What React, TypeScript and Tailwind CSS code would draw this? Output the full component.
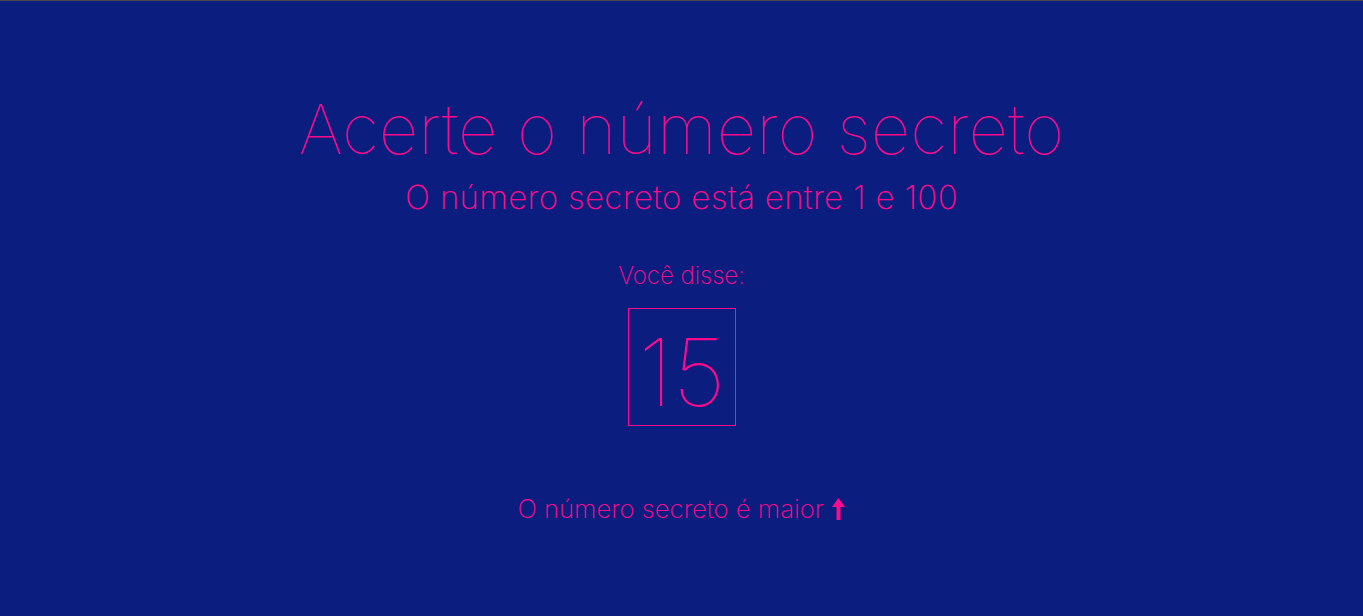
export default function App() {
  return (
    <main
      className="min-h-screen w-full bg-[#0b1d7e] border-t border-[#4a4a4a] flex flex-col items-center text-[#ff0a8c] font-extralight"
      style={{ fontFamily: "Inter, 'Noto Sans', sans-serif" }}
    >
      <h1 className="mt-[86px] text-[69px] leading-[84px] font-thin">
        Acerte o número secreto
      </h1>
      <h2 className="mt-[6px] text-[33px] leading-[40px] font-extralight tracking-[0.01em]">
        O número secreto está entre 1 e 100
      </h2>

      <p className="mt-[43px] text-[24px] leading-[32px] font-extralight">Você disse:</p>
      <div className="mt-[16px] w-[108px] h-[118px] border border-[#ff0a8c] flex items-center justify-center pt-[10px] pl-[1px]">
        <span className="text-[94px] leading-none font-thin">15</span>
      </div>

      <div className="mt-[66px] flex items-center gap-[7px] text-[25.7px] leading-[34px] font-extralight">
        <span>O número secreto é maior</span>
        <svg width="15" height="24" viewBox="0 0 15 24" fill="#ff0a8c">
          <path d="M7.5 1 L14 10 L9.5 10 L9.5 23 L5.5 23 L5.5 10 L1 10 Z" />
        </svg>
      </div>
    </main>
  );
}
